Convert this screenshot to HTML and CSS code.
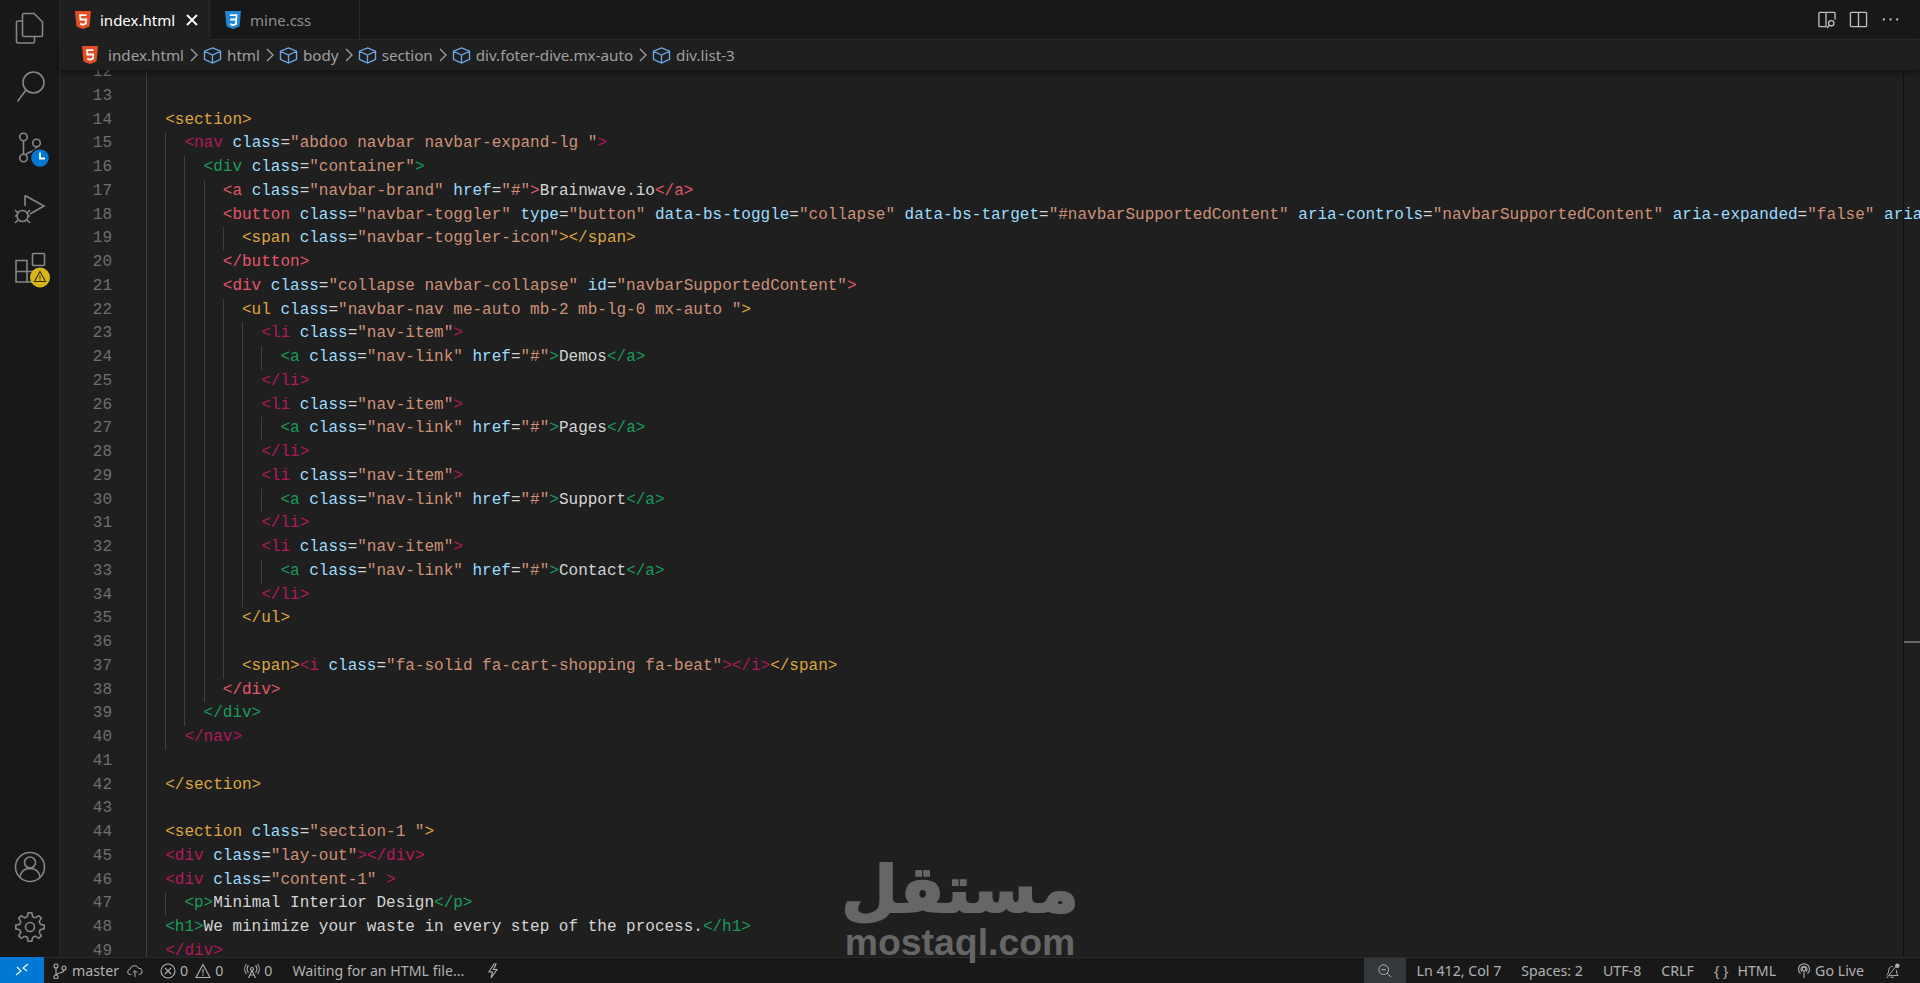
FILE: index.html
```html
<!DOCTYPE html>
<html>
<head>
    <meta charset="UTF-8">
    <title>index.html - VS Code</title>
    <link rel="stylesheet" href="styles.css">
</head>
<body>
<div class="workbench">
    <div class="activity">
        <svg class="act" viewBox="0 0 60 60"><path d="M24 13.500h10l8.500 8.500v13a1.500 1.500 0 0 1-1.500 1.500H24a1.500 1.500 0 0 1-1.500-1.500V15a1.500 1.500 0 0 1 1.500-1.500zM22.500 21H18a1.500 1.500 0 0 0-1.500 1.500V41.500A1.500 1.500 0 0 0 18 43h15a1.500 1.500 0 0 0 1.500-1.500v-5"/></svg>
        <svg class="act" viewBox="0 0 60 60"><circle cx="33.500" cy="22.500" r="10.500"/><path d="M26 30L17.500 41.500"/></svg>
        <svg class="act" viewBox="0 0 60 60"><circle cx="23.500" cy="17" r="3.800"/><circle cx="36.500" cy="23" r="3.800"/><circle cx="23.500" cy="38" r="3.800"/><path d="M23.500 21v13M36.500 27c0 5-9 4-11 8"/><circle class="badge-blue" cx="40" cy="38" r="9.500"/><path class="badge-hand" d="M40 32.500V38.500H45"/></svg>
        <svg class="act" viewBox="0 0 60 60"><path d="M25 15.500L44 26 30 34M25 15.500V26"/><circle cx="22.500" cy="36" r="5.500"/><path d="M15 30l3 3M30 30l-3 3M15 36h2M28 36h2M15 43l3-3M30 43l-3-3"/></svg>
        <svg class="act" viewBox="0 0 60 60"><rect x="32.500" y="13.500" width="12" height="12" rx="1"/><path d="M16 20.500h11V42H16zM16 31.500h22V42H27"/><circle class="badge-yellow" cx="40" cy="37.500" r="10"/><path class="badge-warn" d="M40 31.500l5.500 10h-11zM40 35.500v3M40 39.500v1"/></svg>
        <svg class="act act-low" viewBox="0 0 60 60"><circle cx="30" cy="30" r="14.500"/><circle cx="30" cy="25.500" r="5.500"/><path d="M20 40c1-6 5-8.500 10-8.500s9 2.500 10 8.500"/></svg>
        <svg class="act" viewBox="0 0 60 60"><defs><path id="tooth" d="M27.300 19.800L28.200 15.800H31.800L32.700 19.800A10.600 10.600 0 0 1 35.300 20.900"/></defs><use href="#tooth"/><use href="#tooth" transform="rotate(45 30 30)"/><use href="#tooth" transform="rotate(90 30 30)"/><use href="#tooth" transform="rotate(135 30 30)"/><use href="#tooth" transform="rotate(180 30 30)"/><use href="#tooth" transform="rotate(225 30 30)"/><use href="#tooth" transform="rotate(270 30 30)"/><use href="#tooth" transform="rotate(315 30 30)"/><circle cx="30" cy="30" r="4.500"/></svg>
    </div>

    <div class="editor">
        <div class="tabs">
            <div class="tab tab-active">
                <svg class="file-icon" viewBox="0 0 16 18"><path class="html-shield" d="M0 0h16l-1.500 15.500L8 18l-6.500-2.500z"/><path class="icon-5" d="M11.500 4.200H5l.4 4.300h5.800l-.4 4.200L8 13.800l-2.800-1.100"/></svg>
                <span class="tab-name">index.html</span>
                <svg class="tab-close" viewBox="0 0 12 12"><path d="M1 1l10 10M11 1L1 11"/></svg>
            </div>
            <div class="tab">
                <svg class="file-icon" viewBox="0 0 16 18"><path class="css-shield" d="M0 0h16l-1.500 15.500L8 18l-6.500-2.500z"/><path class="icon-5" d="M4.800 4.200h6.700l-.5 9L8 14.200l-3-1M5.200 8.500h6"/></svg>
                <span>mine.css</span>
            </div>
            <div class="tab-actions">
                <svg viewBox="0 0 20 20"><path d="M9 2.500H3a1 1 0 0 0-1 1v13a1 1 0 0 0 1 1h7M9.500 2.500V17M9.500 2.500H18a1 1 0 0 1 1 1V10"/><circle cx="15" cy="14" r="2.800"/><path d="M13 16l-2.500 3"/></svg>
                <svg viewBox="0 0 20 20"><rect x="1.500" y="2.500" width="17" height="15" rx="1"/><path d="M10 2.500v15"/></svg>
                <svg viewBox="0 0 20 20"><circle class="dot" cx="3" cy="10" r="1.200"/><circle class="dot" cx="10" cy="10" r="1.200"/><circle class="dot" cx="17" cy="10" r="1.200"/></svg>
            </div>
        </div>

        <div class="crumbs">
            <svg class="file-icon crumb-file" viewBox="0 0 16 18"><path class="html-shield" d="M0 0h16l-1.500 15.500L8 18l-6.500-2.500z"/><path class="icon-5" d="M11.500 4.200H5l.4 4.300h5.800l-.4 4.200L8 13.800l-2.800-1.100"/></svg>
            <span>index.html</span>
            <svg class="chev" viewBox="0 0 8 14"><path d="M1 1l6 6-6 6"/></svg>
            <svg class="box" viewBox="0 0 20 18"><path d="M10 1l8.500 3.500v8.500L10 17l-8.500-4V4.500zM1.500 4.500L10 8.500l8.500-4M10 8.500V17"/></svg>
            <span>html</span>
            <svg class="chev" viewBox="0 0 8 14"><path d="M1 1l6 6-6 6"/></svg>
            <svg class="box" viewBox="0 0 20 18"><path d="M10 1l8.500 3.500v8.500L10 17l-8.500-4V4.500zM1.500 4.500L10 8.500l8.500-4M10 8.500V17"/></svg>
            <span>body</span>
            <svg class="chev" viewBox="0 0 8 14"><path d="M1 1l6 6-6 6"/></svg>
            <svg class="box" viewBox="0 0 20 18"><path d="M10 1l8.500 3.500v8.500L10 17l-8.500-4V4.500zM1.500 4.500L10 8.500l8.500-4M10 8.500V17"/></svg>
            <span>section</span>
            <svg class="chev" viewBox="0 0 8 14"><path d="M1 1l6 6-6 6"/></svg>
            <svg class="box" viewBox="0 0 20 18"><path d="M10 1l8.500 3.500v8.500L10 17l-8.500-4V4.500zM1.500 4.500L10 8.500l8.500-4M10 8.500V17"/></svg>
            <span>div.foter-dive.mx-auto</span>
            <svg class="chev" viewBox="0 0 8 14"><path d="M1 1l6 6-6 6"/></svg>
            <svg class="box" viewBox="0 0 20 18"><path d="M10 1l8.500 3.500v8.500L10 17l-8.500-4V4.500zM1.500 4.500L10 8.500l8.500-4M10 8.500V17"/></svg>
            <span>div.list-3</span>
        </div>

        <div class="code-view">
            <div class="lines">
<div class="row"><span class="ln">12</span><span class="code g1"></span></div>
<div class="row"><span class="ln">13</span><span class="code g1"></span></div>
<div class="row"><span class="ln">14</span><span class="code g1">  <i class="gold">&lt;section&gt;</i></span></div>
<div class="row"><span class="ln">15</span><span class="code g2">    <i class="red">&lt;nav</i> <i class="at">class</i>=<i class="st">"abdoo navbar navbar-expand-lg "</i><i class="red">&gt;</i></span></div>
<div class="row"><span class="ln">16</span><span class="code g3">      <i class="green">&lt;div</i> <i class="at">class</i>=<i class="st">"container"</i><i class="green">&gt;</i></span></div>
<div class="row"><span class="ln">17</span><span class="code g4">        <i class="rose">&lt;a</i> <i class="at">class</i>=<i class="st">"navbar-brand"</i> <i class="at">href</i>=<i class="st">"#"</i><i class="rose">&gt;</i>Brainwave.io<i class="rose">&lt;/a&gt;</i></span></div>
<div class="row"><span class="ln">18</span><span class="code g4">        <i class="rose">&lt;button</i> <i class="at">class</i>=<i class="st">"navbar-toggler"</i> <i class="at">type</i>=<i class="st">"button"</i> <i class="at">data-bs-toggle</i>=<i class="st">"collapse"</i> <i class="at">data-bs-target</i>=<i class="st">"#navbarSupportedContent"</i> <i class="at">aria-controls</i>=<i class="st">"navbarSupportedContent"</i> <i class="at">aria-expanded</i>=<i class="st">"false"</i> <i class="at">aria-label</i>=<i class="st">"Toggle navigation"</i><i class="rose">&gt;</i></span></div>
<div class="row"><span class="ln">19</span><span class="code g5">          <i class="gold">&lt;span</i> <i class="at">class</i>=<i class="st">"navbar-toggler-icon"</i><i class="gold">&gt;&lt;/span&gt;</i></span></div>
<div class="row"><span class="ln">20</span><span class="code g4">        <i class="rose">&lt;/button&gt;</i></span></div>
<div class="row"><span class="ln">21</span><span class="code g4">        <i class="rose">&lt;div</i> <i class="at">class</i>=<i class="st">"collapse navbar-collapse"</i> <i class="at">id</i>=<i class="st">"navbarSupportedContent"</i><i class="rose">&gt;</i></span></div>
<div class="row"><span class="ln">22</span><span class="code g5">          <i class="gold">&lt;ul</i> <i class="at">class</i>=<i class="st">"navbar-nav me-auto mb-2 mb-lg-0 mx-auto "</i><i class="gold">&gt;</i></span></div>
<div class="row"><span class="ln">23</span><span class="code g6">            <i class="red">&lt;li</i> <i class="at">class</i>=<i class="st">"nav-item"</i><i class="red">&gt;</i></span></div>
<div class="row"><span class="ln">24</span><span class="code g7">              <i class="green">&lt;a</i> <i class="at">class</i>=<i class="st">"nav-link"</i> <i class="at">href</i>=<i class="st">"#"</i><i class="green">&gt;</i>Demos<i class="green">&lt;/a&gt;</i></span></div>
<div class="row"><span class="ln">25</span><span class="code g6">            <i class="red">&lt;/li&gt;</i></span></div>
<div class="row"><span class="ln">26</span><span class="code g6">            <i class="red">&lt;li</i> <i class="at">class</i>=<i class="st">"nav-item"</i><i class="red">&gt;</i></span></div>
<div class="row"><span class="ln">27</span><span class="code g7">              <i class="green">&lt;a</i> <i class="at">class</i>=<i class="st">"nav-link"</i> <i class="at">href</i>=<i class="st">"#"</i><i class="green">&gt;</i>Pages<i class="green">&lt;/a&gt;</i></span></div>
<div class="row"><span class="ln">28</span><span class="code g6">            <i class="red">&lt;/li&gt;</i></span></div>
<div class="row"><span class="ln">29</span><span class="code g6">            <i class="red">&lt;li</i> <i class="at">class</i>=<i class="st">"nav-item"</i><i class="red">&gt;</i></span></div>
<div class="row"><span class="ln">30</span><span class="code g7">              <i class="green">&lt;a</i> <i class="at">class</i>=<i class="st">"nav-link"</i> <i class="at">href</i>=<i class="st">"#"</i><i class="green">&gt;</i>Support<i class="green">&lt;/a&gt;</i></span></div>
<div class="row"><span class="ln">31</span><span class="code g6">            <i class="red">&lt;/li&gt;</i></span></div>
<div class="row"><span class="ln">32</span><span class="code g6">            <i class="red">&lt;li</i> <i class="at">class</i>=<i class="st">"nav-item"</i><i class="red">&gt;</i></span></div>
<div class="row"><span class="ln">33</span><span class="code g7">              <i class="green">&lt;a</i> <i class="at">class</i>=<i class="st">"nav-link"</i> <i class="at">href</i>=<i class="st">"#"</i><i class="green">&gt;</i>Contact<i class="green">&lt;/a&gt;</i></span></div>
<div class="row"><span class="ln">34</span><span class="code g6">            <i class="red">&lt;/li&gt;</i></span></div>
<div class="row"><span class="ln">35</span><span class="code g5">          <i class="gold">&lt;/ul&gt;</i></span></div>
<div class="row"><span class="ln">36</span><span class="code g5"></span></div>
<div class="row"><span class="ln">37</span><span class="code g5">          <i class="gold">&lt;span&gt;</i><i class="red">&lt;i</i> <i class="at">class</i>=<i class="st">"fa-solid fa-cart-shopping fa-beat"</i><i class="red">&gt;&lt;/i&gt;</i><i class="gold">&lt;/span&gt;</i></span></div>
<div class="row"><span class="ln">38</span><span class="code g4">        <i class="rose">&lt;/div&gt;</i></span></div>
<div class="row"><span class="ln">39</span><span class="code g3">      <i class="green">&lt;/div&gt;</i></span></div>
<div class="row"><span class="ln">40</span><span class="code g2">    <i class="red">&lt;/nav&gt;</i></span></div>
<div class="row"><span class="ln">41</span><span class="code g1"></span></div>
<div class="row"><span class="ln">42</span><span class="code g1">  <i class="gold">&lt;/section&gt;</i></span></div>
<div class="row"><span class="ln">43</span><span class="code g1"></span></div>
<div class="row"><span class="ln">44</span><span class="code g1">  <i class="gold">&lt;section</i> <i class="at">class</i>=<i class="st">"section-1 "</i><i class="gold">&gt;</i></span></div>
<div class="row"><span class="ln">45</span><span class="code g1">  <i class="red">&lt;div</i> <i class="at">class</i>=<i class="st">"lay-out"</i><i class="red">&gt;&lt;/div&gt;</i></span></div>
<div class="row"><span class="ln">46</span><span class="code g1">  <i class="red">&lt;div</i> <i class="at">class</i>=<i class="st">"content-1"</i> <i class="red">&gt;</i></span></div>
<div class="row"><span class="ln">47</span><span class="code g2">    <i class="green">&lt;p&gt;</i>Minimal Interior Design<i class="green">&lt;/p&gt;</i></span></div>
<div class="row"><span class="ln">48</span><span class="code g1">  <i class="green">&lt;h1&gt;</i>We minimize your waste in every step of the process.<i class="green">&lt;/h1&gt;</i></span></div>
<div class="row"><span class="ln">49</span><span class="code g1">  <i class="red">&lt;/div&gt;</i></span></div>
            </div>
            <div class="ruler"></div>
            <div class="ruler-mark"></div>
        </div>
    </div>
</div>

<div class="statusbar">
    <div class="remote"><svg viewBox="0 0 16 16"><path d="M2 13l5-4-4-4M14 2l-5 4 4 3"/></svg></div>
    <div class="st-item st-branch">
        <svg viewBox="0 0 16 16"><circle cx="4" cy="3" r="2"/><circle cx="4" cy="14" r="2"/><circle cx="12" cy="5" r="2"/><path d="M4 5v7M12 7c0 4-7 2-8 5"/></svg>
        <span>master</span>
        <svg class="st-cloud" viewBox="0 0 18 16"><path d="M5 12H4a3 3 0 0 1-.5-6A5 5 0 0 1 13 5a3.500 3.500 0 0 1 1 7h-1M9 15V8M6.500 10L9 7.500l2.500 2.500"/></svg>
    </div>
    <div class="st-item st-problems">
        <svg viewBox="0 0 16 16"><circle cx="8" cy="8" r="7"/><path d="M5 5l6 6M11 5l-6 6"/></svg>
        <span>0</span>
        <svg class="st-warn" viewBox="0 0 16 16"><path d="M8 1.500l7 13H1zM8 6v4.500M8 11.500v1.500"/></svg>
        <span>0</span>
    </div>
    <div class="st-item st-ports">
        <svg viewBox="0 0 16 16"><circle cx="8" cy="6" r="1.500"/><path d="M8 7.500L4.500 15M8 7.500l3.500 7.500M5.500 12h5M4.500 2.500a5 5 0 0 0 0 7M11.500 2.500a5 5 0 0 1 0 7M2.500 1a8 8 0 0 0 0 10M13.500 1a8 8 0 0 1 0 10"/></svg>
        <span>0</span>
    </div>
    <div class="st-item st-wait"><span>Waiting for an HTML file...</span></div>
    <div class="st-item st-bolt"><svg viewBox="0 0 12 16"><path d="M7 1L2 9h3.500L4 15l6-8.500H6.500L9 1z"/></svg></div>

    <div class="st-right">
        <div class="st-zoom"><svg viewBox="0 0 18 18"><circle cx="7.500" cy="7.500" r="5.500"/><path d="M11.500 11.500L16 16M5 7.500h5"/></svg></div>
        <span>Ln 412, Col 7</span>
        <span>Spaces: 2</span>
        <span>UTF-8</span>
        <span>CRLF</span>
        <span class="st-lang"><b>{ }</b>HTML</span>
        <span class="st-live"><svg viewBox="0 0 16 16"><circle cx="8" cy="6" r="1.800"/><path d="M8 8v7M4.500 10.500a5.500 5.500 0 1 1 7 0M6 8.500a3 3 0 1 1 4 0"/></svg>Go Live</span>
        <svg class="st-bell" viewBox="0 0 18 18"><path d="M3 14c2-2 2-4 2.500-7C6 4.500 8 3.500 10 4M14 8c0 3 .5 4.500 2 6H6M7 16h4M3 17L14 3"/><circle class="dot" cx="15" cy="3" r="2.500"/></svg>
    </div>
</div>

<div class="watermark">
    <span class="wm-ar">مستقل</span>
    <span class="wm-en">mostaql.com</span>
</div>
</body>
</html>
```

FILE: styles.css
```css
html, body {
    margin: 0;
    height: 100%;
    overflow: hidden;
}

body {
    position: relative;
    display: flex;
    flex-direction: column;
    width: 1920px;
    height: 983px;
    background: #1f1f1f;
    font-family: "Noto Sans", sans-serif;
    color: #a8a8a8;
}

svg {
    display: block;
    flex: none;
    fill: none;
    stroke: currentColor;
}

.workbench {
    flex: 1;
    display: flex;
    min-height: 0;
}

/* activity bar */
.activity {
    width: 60px;
    flex: none;
    display: flex;
    flex-direction: column;
    background: #181818;
    border-right: 1px solid #2b2b2b;
    box-sizing: border-box;
    color: #868686;
}

.act {
    width: 60px;
    height: 60px;
    stroke-width: 1.6;
}

.act-low {
    margin-top: auto;
}

.badge-blue {
    fill: #0078d4;
    stroke: #181818;
    stroke-width: 1.5;
}

.badge-hand {
    stroke: #fff;
    stroke-width: 1.8;
}

.badge-yellow {
    fill: #d9b51c;
    stroke: none;
}

.badge-warn {
    stroke: #3a3210;
    stroke-width: 1.1;
}

/* tabs */
.editor {
    flex: 1;
    min-width: 0;
    display: flex;
    flex-direction: column;
}

.tabs {
    height: 40px;
    flex: none;
    display: flex;
    background: #181818;
    border-bottom: 1px solid #2b2b2b;
    box-sizing: border-box;
}

.tab {
    width: 150px;
    box-sizing: border-box;
    display: flex;
    align-items: center;
    padding-left: 15px;
    gap: 9px;
    border-right: 1px solid #2b2b2b;
    font-size: 15px;
    color: #8d8d8d;
    height: 40px;
}

.tab-active {
    background: #1f1f1f;
    color: #ffffff;
}

.tab-name {
    width: 77px;
    white-space: nowrap;
}

.tab-close {
    width: 12px;
    height: 12px;
    stroke-width: 1.8;
}

.file-icon {
    width: 16px;
    height: 18px;
}

.html-shield {
    fill: #e44d26;
    stroke: none;
}

.css-shield {
    fill: #1e88d2;
    stroke: none;
}

.icon-5 {
    stroke: #fff;
    stroke-width: 1.8;
}

.tab-actions {
    margin-left: auto;
    display: flex;
    align-items: center;
    gap: 13px;
    padding-right: 20px;
    color: #c0c0c0;
}

.tab-actions svg {
    width: 19px;
    height: 19px;
    stroke-width: 1.4;
}

.dot {
    fill: currentColor;
    stroke: none;
}

/* breadcrumbs */
.crumbs {
    height: 30px;
    flex: none;
    display: flex;
    align-items: center;
    padding-left: 22px;
    font-size: 15.2px;
    color: #a0a0a0;
    background: #1f1f1f;
    box-shadow: 0 3px 6px rgba(0, 0, 0, 0.45);
    position: relative;
    z-index: 1;
    white-space: nowrap;
}

.crumb-file {
    margin-right: 10px;
}

.chev {
    width: 8px;
    height: 14px;
    margin: 0 5px 0 6px;
    stroke-width: 1.3;
    color: #a0a0a0;
}

.box {
    width: 19px;
    height: 17px;
    margin-right: 5px;
    stroke-width: 1.4;
    color: #6fa8e8;
}

/* code */
.code-view {
    flex: 1;
    min-height: 0;
    overflow: hidden;
    position: relative;
}

.lines {
    margin-top: -9px;
    font-family: "Liberation Mono", monospace;
    font-size: 16px;
}

.row {
    display: flex;
    height: 23.75px;
    line-height: 23.75px;
}

.ln {
    width: 52px;
    flex: none;
    margin-right: 34px;
    text-align: right;
    color: #6b6f73;
}

.code {
    flex: 1;
    white-space: pre;
    color: #d4d4d4;
    background-image: repeating-linear-gradient(90deg, #404040 0, #404040 1px, transparent 1px, transparent 19.2px);
    background-repeat: no-repeat;
    background-size: 19.2px 100%;
}

.code i {
    font-style: normal;
}

.g2 { background-size: 38.4px 100%; }
.g3 { background-size: 57.6px 100%; }
.g4 { background-size: 76.8px 100%; }
.g5 { background-size: 96px 100%; }
.g6 { background-size: 115.2px 100%; }
.g7 { background-size: 134.4px 100%; }

.gold { color: #dda63f; }
.red { color: #b3195c; }
.green { color: #189c5b; }
.rose { color: #e3566a; }
.at { color: #9cdcfe; }
.st { color: #ce9178; }

.ruler {
    position: absolute;
    top: 0;
    bottom: 0;
    right: 16px;
    width: 1px;
    background: #111;
}

.ruler-mark {
    position: absolute;
    top: 571px;
    right: 0;
    width: 16px;
    height: 2px;
    background: #6a6a6a;
}

/* status bar */
.statusbar {
    height: 26px;
    flex: none;
    display: flex;
    align-items: center;
    background: #181818;
    border-top: 1px solid #2b2b2b;
    box-sizing: border-box;
    font-size: 14.2px;
    color: #b0b0b0;
    white-space: nowrap;
}

.statusbar svg {
    width: 16px;
    height: 16px;
    stroke-width: 1.1;
}

.remote {
    width: 44px;
    height: 26px;
    margin-top: -1px;
    display: flex;
    align-items: center;
    justify-content: center;
    background: #0078d4;
    color: #fff;
}

.st-item {
    display: flex;
    align-items: center;
    gap: 4px;
}

.st-branch {
    margin-left: 8px;
}

.st-cloud {
    margin-left: 4px;
}

.st-problems {
    margin-left: 17px;
}

.st-warn {
    margin-left: 3px;
}

.st-ports {
    margin-left: 21px;
}

.st-wait {
    margin-left: 20px;
}

.st-bolt {
    margin-left: 21px;
}

.st-right {
    margin-left: auto;
    display: flex;
    align-items: center;
    gap: 20px;
    padding-right: 20px;
}

.st-zoom {
    width: 42px;
    height: 25px;
    margin-right: -9px;
    background: #33383c;
    display: flex;
    align-items: center;
    justify-content: center;
}

.st-lang {
    display: flex;
    gap: 9px;
}

.st-lang b {
    font-weight: 400;
}

.st-live {
    display: flex;
    align-items: center;
    gap: 3px;
}

/* watermark over everything */
.watermark {
    position: absolute;
    left: 845px;
    top: 852px;
    width: 230px;
    display: flex;
    flex-direction: column;
    align-items: center;
    color: #666666;
    pointer-events: none;
}

.wm-ar {
    font-family: "DejaVu Sans", sans-serif;
    font-weight: 700;
    font-size: 65px;
    line-height: 76px;
    -webkit-text-stroke: 2px #666666;
}

.wm-en {
    font-family: "Liberation Sans", sans-serif;
    font-weight: 700;
    font-size: 37.4px;
    line-height: 28px;
}
```
